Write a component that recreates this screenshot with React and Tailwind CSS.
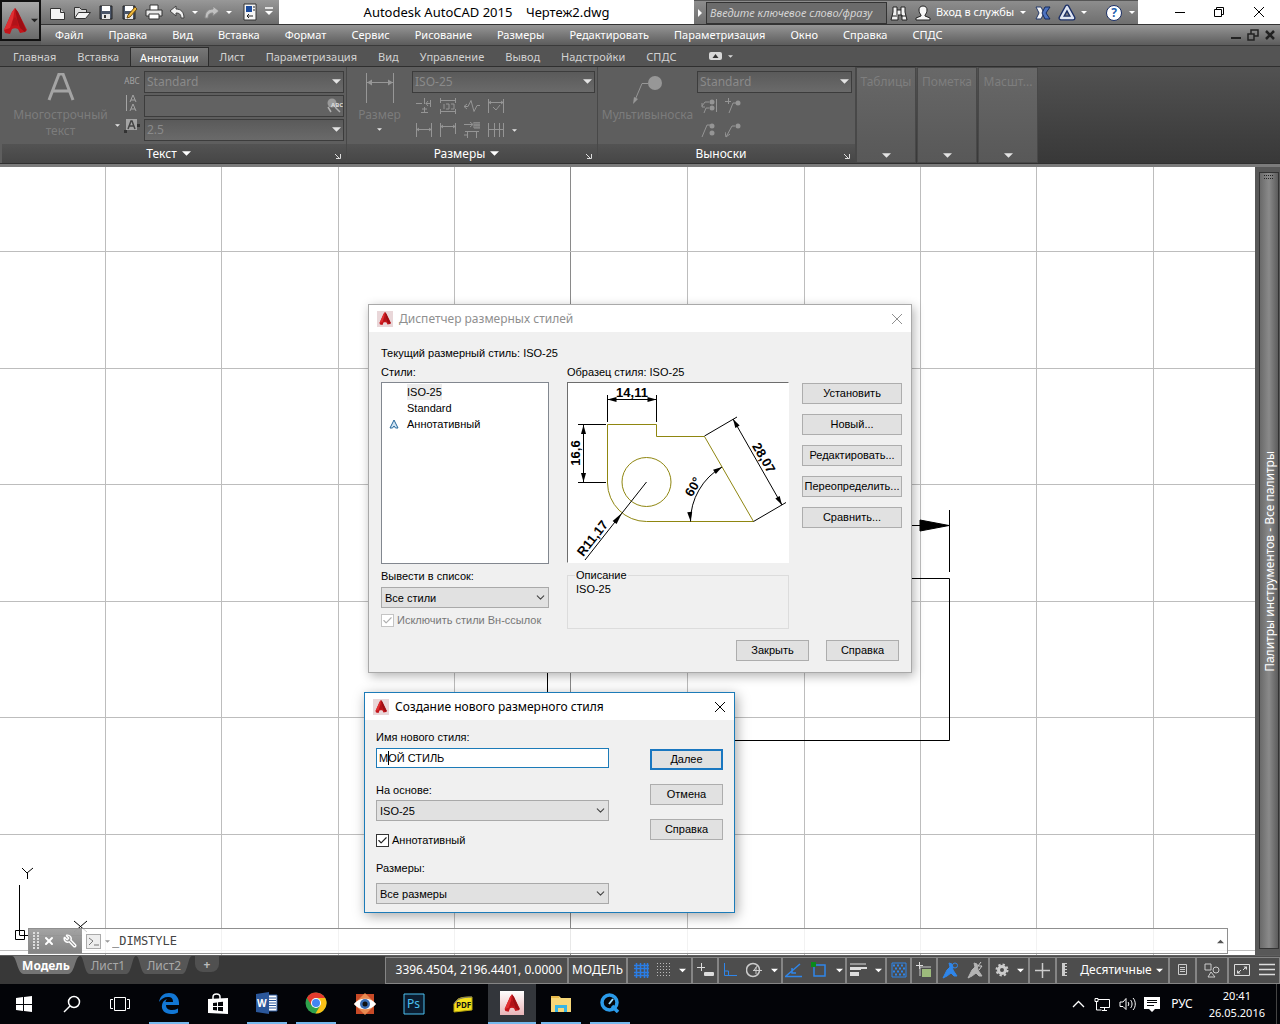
import { ChevronDown, Check, X, Wrench } from "lucide-react";

const MENU = ["Файл", "Правка", "Вид", "Вставка", "Формат", "Сервис", "Рисование", "Размеры", "Редактировать", "Параметризация", "Окно", "Справка", "СПДС"];
const TABS = ["Главная", "Вставка", "Аннотации", "Лист", "Параметризация", "Вид", "Управление", "Вывод", "Надстройки", "СПДС"];
const STYLES = ["ISO-25", "Standard", "Аннотативный"];

const VERTICALS = [105, 221, 338, 454, 570, 687, 804, 920, 1036, 1153];
const HORIZONTALS = [84, 201, 317, 434, 550, 667, 783];

function Svg({ w = 20, h = 20, className = "", children }) {
  return (
    <svg width={w} height={h} viewBox={`0 0 ${w} ${h}`} fill="none" className={`shrink-0 ${className}`} aria-hidden="true">
      {children}
    </svg>
  );
}

function Caret({ className = "text-white", size = 9 }) {
  return (
    <svg width={size} height="5" viewBox="0 0 10 5" className={`shrink-0 ${className}`} aria-hidden="true">
      <path d="M0 0h10L5 5z" fill="currentColor" />
    </svg>
  );
}

function LogoA({ w, h }) {
  return (
    <svg width={w} height={h} viewBox="0 0 24 26" className="shrink-0" aria-hidden="true">
      <path d="M12 0L9 4 1 22l1 3 5 1 2-5c2-1 4-1 6 0l2 4 5-1 2-2L15 4z" fill="#c4141a" />
      <path d="M12 0L9 4 1 22l6-2 3-9z" fill="#e02f32" />
      <path d="M12 0l3 4 8 18-1 2-5-4-3-9z" fill="#9c0e14" />
      <path d="M10 12l2-3 2 3 1 6c-2-1-4-1-6 0z" fill="#b01319" />
    </svg>
  );
}

/* ---------- Title bar ---------- */

function QuickAccess() {
  return (
    <div className="flex h-6 w-[238px] shrink-0 items-center gap-1 bg-linear-to-b from-[#989898] to-[#6c6c6c] pl-[7px]">
      <button aria-label="Создать">
        <Svg><path d="M2.500 6.500h10l4 4v7h-14z" fill="#f4f4f4" stroke="#333" /><path d="M12.500 6.500v4h4" fill="#ccc" stroke="#333" /></Svg>
      </button>
      <button aria-label="Открыть">
        <Svg><path d="M2.500 16V5.500h5l2 2h5v3" fill="#ddd" stroke="#333" /><path d="M2.500 16.500l4-6h12l-5 6z" fill="#f4f4f4" stroke="#333" /></Svg>
      </button>
      <button aria-label="Сохранить">
        <Svg><path d="M4 4h12v13H4z" fill="#4a5568" stroke="#222" /><path d="M6 4h8v5H6z" fill="#fff" /><path d="M6 12h8v5H6z" fill="#e5e5e5" /><path d="M8 13h2v3H8z" fill="#333" /></Svg>
      </button>
      <button aria-label="Сохранить как">
        <Svg><path d="M3 4h12v13H3z" fill="#4a5568" stroke="#222" /><path d="M5 4h8v5H5z" fill="#fff" /><path d="M5 12h8v5H5z" fill="#e5e5e5" /><path d="M8 13l7-8 2 2-7 8-3 1z" fill="#f0b93a" stroke="#6b4a10" /></Svg>
      </button>
      <button aria-label="Печать">
        <Svg><path d="M6 8V3h8v5" fill="#fff" stroke="#333" /><path d="M2 8h16v6H2z" fill="#e8e8e8" stroke="#333" /><path d="M5 12h10v5H5z" fill="#fff" stroke="#333" /></Svg>
      </button>
      <button aria-label="Отменить">
        <Svg><path d="M2 9l6-5v3c5 0 8 3 8 9h-3c0-4-2-5-5-5v3z" fill="#f0f0f0" stroke="#444" /></Svg>
      </button>
      <Caret size={6} />
      <button aria-label="Повторить">
        <Svg><path d="M17 9l-6-5v3c-5 0-8 3-8 9h3c0-4 2-5 5-5v3z" fill="#c0c0c0" stroke="#888" /></Svg>
      </button>
      <Caret size={6} />
      <button aria-label="Рабочее пространство" className="ml-1">
        <Svg><path d="M4 2h12v16H4z" fill="#f6f6f6" stroke="#333" /><path d="M6 4h6v6H6z" fill="#1d4c9c" /><path d="M13 5h2M13 8h2M7 14h6M7 14l2-2M7 14l2 2" stroke="#222" /></Svg>
      </button>
      <button aria-label="Настройка панели">
        <Svg w={10} h={12}><path d="M1 2h8" stroke="#fff" strokeWidth="1.5" /><path d="M1 5h8L5 9z" fill="#fff" /></Svg>
      </button>
    </div>
  );
}

function SearchGroup() {
  return (
    <div className="flex h-6 w-[444px] shrink-0 items-center border-t border-[#555] bg-linear-to-b from-[#8d8d8d] to-[#6f6f6f] text-white">
      <button aria-label="Развернуть" className="flex w-3 shrink-0 justify-center">
        <Svg w={6} h={10}><path d="M1 1l4 4-4 4z" fill="#fff" /></Svg>
      </button>
      <input
        aria-label="Поиск"
        placeholder="Введите ключевое слово/фразу"
        className="h-[22px] w-[181px] shrink-0 border border-[#333] bg-[#6b6b6b] px-[3px] text-[11px] italic placeholder:text-[#d4d4d4]"
      />
      <button aria-label="Найти" className="ml-[3px]">
        <Svg w={18} h={18}><path d="M3 3h4v3h4V3h4v5l2 8h-5v-5H8v5H1l2-8z" fill="#f2f2f2" stroke="#222" /><path d="M7 6v5M11 6v5M2 12h5M11 12h5" stroke="#222" /></Svg>
      </button>
      <button className="ml-[6px] flex items-center gap-1 text-[11px]">
        <Svg w={18} h={18}><path d="M9 2c3 0 4 2 4 4s-1 4-2 5v1l5 2v2H2v-2l5-2v-1C6 10 5 8 5 6s1-4 4-4z" fill="#f6f6f6" stroke="#222" /></Svg>
        <span className="whitespace-nowrap">Вход в службы</span>
        <Caret size={6} className="ml-[2px] text-white" />
      </button>
      <button aria-label="Exchange" className="ml-[8px]">
        <Svg w={18} h={18}><path d="M2 3h5l3 6-3 6H2l3-6z" fill="#f4f4f4" stroke="#23396b" /><path d="M16 3h-5L8 9l3 6h5l-4-6z" fill="#4d73c0" stroke="#152a5c" /></Svg>
      </button>
      <button aria-label="Autodesk 360" className="ml-[6px] flex items-center gap-[5px]">
        <Svg w={18} h={18}><path d="M9 3L3 14h12z" stroke="#1b2f66" strokeWidth="5" strokeLinejoin="round" /><path d="M9 3L3 14h12z" stroke="#dfe5f2" strokeWidth="2.4" strokeLinejoin="round" /></Svg>
        <Caret size={6} />
      </button>
      <button aria-label="Справка" className="ml-[19px] flex items-center gap-[7px]">
        <span className="flex h-4 w-4 items-center justify-center rounded-full border border-[#1b2f66] bg-white text-[12px] leading-none font-bold text-[#1f5fae]">?</span>
        <Caret size={6} />
      </button>
    </div>
  );
}

function Header() {
  return (
    <header className="flex bg-[#5a5a5a]">
      <button aria-label="Меню приложения" className="flex h-[41px] w-[41px] shrink-0 items-center justify-center gap-1 border-2 border-[#111] bg-linear-to-b from-[#a8a8a8] to-[#6a6a6a]">
        <LogoA w={24} h={26} />
        <Caret size={7} className="text-[#222]" />
      </button>
      <div className="min-w-0 flex-1">
        <div className="flex h-6 bg-white">
          <QuickAccess />
          <h1 className="flex-1 truncate text-center text-[13px] leading-6 whitespace-pre">{"Autodesk AutoCAD 2015    Чертеж2.dwg"}</h1>
          <SearchGroup />
          <div className="flex w-[142px] shrink-0 items-center justify-end gap-[28px] pr-[15px]">
            <button aria-label="Свернуть"><Svg w={10} h={12}><path d="M0 6.5h10" stroke="#000" /></Svg></button>
            <button aria-label="Восстановить"><Svg w={12} h={12}><path d="M1.5 3.5h7v7h-7zM3.5 3.5v-2h7v7h-2" stroke="#000" /></Svg></button>
            <button aria-label="Закрыть"><Svg w={12} h={12}><path d="M1 1l10 10M11 1L1 11" stroke="#000" /></Svg></button>
          </div>
        </div>
        <nav className="flex h-[21px] items-center gap-[25px] border-t border-[#333] bg-linear-to-b from-[#969696] to-[#5c5c5c] pl-[14px] text-[11px] text-white">
          {MENU.map((m) => (
            <button key={m} className="whitespace-nowrap">{m}</button>
          ))}
          <div className="ml-auto flex items-center gap-[6px] pr-[5px]">
            <button aria-label="Свернуть чертеж"><Svg w={10} h={12}><path d="M0 9h10" stroke="#222" strokeWidth="2" /></Svg></button>
            <button aria-label="Восстановить чертеж"><Svg w={12} h={12}><path d="M1 5h6v6H1zM4 5V1h7v6H7" stroke="#222" strokeWidth="1.5" /></Svg></button>
            <button aria-label="Закрыть чертеж"><Svg w={10} h={12}><path d="M1 2l8 8M9 2l-8 8" stroke="#222" strokeWidth="2.5" /></Svg></button>
          </div>
        </nav>
      </div>
    </header>
  );
}

/* ---------- Ribbon ---------- */

function RibbonSelect({ label, value }) {
  return (
    <div className="relative">
      <select aria-label={label} className="block h-[22px] w-full appearance-none border border-[#3c3c3c] bg-linear-to-b from-[#5a5a5a] to-[#6a6a6a] px-[2px] text-[12px] text-[#8a8a8a]">
        <option>{value}</option>
      </select>
      <Caret className="pointer-events-none absolute top-2 right-[3px] text-[#e4e4e4]" />
    </div>
  );
}

function PanelLabel({ children, launcher = true }) {
  return (
    <div className="relative flex h-[19px] items-center justify-center bg-linear-to-b from-[#535353] to-[#464646] pr-[11px] text-[12px] text-white">
      <button className="flex items-center gap-[5px]">{children}</button>
      {launcher && (
        <button aria-label="Параметры" className="absolute right-[5px] bottom-1">
          <Svg w={6} h={6}><path d="M0 1l4 4M5.5 1v4.5H1" stroke="#ddd" /></Svg>
        </button>
      )}
    </div>
  );
}

function ToolIcon({ name, d, dots }) {
  return (
    <button aria-label={name}>
      <Svg w={16} h={16}>
        <path d={d} stroke="#959595" />
        {dots && dots.map(([x, y]) => <circle key={`${x}-${y}`} cx={x} cy={y} r="2.5" fill="#959595" />)}
      </Svg>
    </button>
  );
}

function CollapsedPanel({ title }) {
  return (
    <button className="flex w-[60px] shrink-0 flex-col items-center justify-between overflow-hidden border border-[#484848] bg-linear-to-b from-[#686868] to-[#585858] pt-[5px] pb-1 text-[12px] text-[#7e7e7e]">
      <span className="whitespace-nowrap">{title}</span>
      <Caret className="text-[#e4e4e4]" />
    </button>
  );
}

function Ribbon() {
  return (
    <section className="bg-[#545454]">
      <div role="tablist" className="flex h-[21px] items-end gap-px border-t border-[#3a3a3a] pl-[3px] text-[11px] text-[#d2d2d2]">
        {TABS.map((t) =>
          t === "Аннотации" ? (
            <button key={t} role="tab" aria-selected="true" className="h-[19px] border border-b-0 border-[#2c2c2c] bg-linear-to-b from-[#777] to-[#5e5e5e] px-[9px] leading-[17px] whitespace-nowrap text-white">{t}</button>
          ) : (
            <button key={t} role="tab" aria-selected="false" className="h-[19px] px-[10px] leading-[19px] whitespace-nowrap">{t}</button>
          )
        )}
        <button aria-label="Вид ленты" className="ml-[22px] flex h-[19px] items-center gap-[6px]">
          <Svg w={13} h={9}><rect width="13" height="8" rx="2" fill="#d8d8d8" /><path d="M3.5 6h6l-3-4z" fill="#333" /></Svg>
          <Caret size={5} className="text-[#d8d8d8]" />
        </button>
      </div>

      <div className="flex h-[98px] border-y border-[#2f2f2f] bg-linear-to-b from-[#525252] to-[#383838]">
        <div className="flex w-[347px] shrink-0 flex-col border-r border-[#484848] bg-[#5e5e5e] pl-[2px]">
          <div className="flex flex-1 pt-1">
            <button className="flex w-[118px] shrink-0 items-center text-[12px] leading-4 text-[#7c7c7c]">
              <span className="flex flex-1 flex-col items-center">
                <Svg w={28} h={28} className="mb-[6px]"><path d="M2 27L12 1h4l10 26M6 18h16" stroke="#a4a4a4" strokeWidth="3" /></Svg>
                <span>Многострочный</span>
                <span className="pb-[3px]">текст</span>
              </span>
              <Caret size={5} className="mt-9 -ml-1 text-[#e4e4e4]" />
            </button>
            <div className="flex w-[24px] shrink-0 flex-col items-center gap-2 pt-1 text-[#a4a4a4]">
              <span className="text-[8px] leading-3">ABC</span>
              <Svg w={14} h={16}><path d="M1.5 0v16M5 7l3-7 3 7M6 5h4M5 16l3-7 3 7M6 14h4" stroke="#a4a4a4" /></Svg>
              <Svg w={16} h={14}><path d="M2 0h11v11H2z" fill="#a4a4a4" /><path d="M4 10l3-8h1l3 8M5 7h5" stroke="#444" strokeWidth="1.5" /><path d="M0 11h3v3H0zM13 5h3v3h-3z" fill="#333" /></Svg>
            </div>
            <div className="flex w-[200px] shrink-0 flex-col gap-[2px]">
              <RibbonSelect label="Стиль текста" value="Standard" />
              <div className="relative">
                <input aria-label="Найти текст" className="block h-[22px] w-full border border-[#3c3c3c] bg-[#626262] px-1 text-[12px] text-[#ddd]" />
                <Svg w={17} h={16} className="pointer-events-none absolute top-[3px] right-px"><circle cx="6" cy="5" r="4.5" fill="#9a9a9a" /><path d="M9 9l5 5M2 9l3 5" stroke="#b0b0b0" strokeWidth="1.5" /><text x="5" y="9" fontSize="6" fontWeight="700" fill="#ddd">ABC</text></Svg>
              </div>
              <RibbonSelect label="Высота текста" value="2.5" />
            </div>
          </div>
          <PanelLabel>Текст <Caret /></PanelLabel>
        </div>

        <div className="flex w-[251px] shrink-0 flex-col border-r border-[#484848] bg-[#5e5e5e]">
          <div className="flex flex-1 pt-1">
            <button className="flex w-[65px] flex-col items-center text-[12px] leading-4 text-[#7c7c7c]">
              <Svg w={30} h={30} className="mt-[2px] mb-1"><path d="M1.5 0v30M28.5 0v30M2 9.5h26" stroke="#979797" /><path d="M2 9.5l5-3v6zM28 9.5l-5-3v6z" fill="#979797" /></Svg>
              <span>Размер</span>
              <Caret size={5} className="mt-1 text-[#e4e4e4]" />
            </button>
            <div className="flex w-[183px] flex-col">
              <RibbonSelect label="Размерный стиль" value="ISO-25" />
              <div className="mt-[5px] flex gap-2 pl-1">
                <ToolIcon name="Разрыв" d="M8.500 0v6M0 5.500h6M10 5.500h5M14.500 2v7M12 3l-2 2.500L12 8M8.500 9v6M5 14.500h7M6 11h5" />
                <ToolIcon name="Корректировать" d="M.5 0v5M15.500 0v5M1 2.500h14M.5 11v5M15.500 11v5M1 13.500h14M4 6v5M6 6h3v5H6M11 6h3v5h-3" />
                <ToolIcon name="Излом" d="M0 8.500h4l3-6 3 11 3-6h3M3 6L0 8.500 3 11" />
                <ToolIcon name="Контроль" d="M.5 1v14M15.500 1v14M1 4.500h14M5 9l3 3 4-5M3 3L1 4.500 3 6M13 3l2 1.500L13 6" />
              </div>
              <div className="mt-2 flex items-center gap-2 pl-1">
                <ToolIcon name="Линейный" d="M.5 1v14M15.500 1v14M1 7.500h14M3 6L1 7.500 3 9M13 6l2 1.500L13 9" />
                <ToolIcon name="Быстрый" d="M.5 1v14M15.500 1v11M1 4.500h14M3 3L1 4.500 3 6M13 3l2 1.500L13 6" />
                <ToolIcon name="Обновить" d="M0 2.500h8M6 0l3 2.500L6 5M10 0h6v6h-6zM12 0v6M14 0v6M10 3h6M1 9.500h14M3.500 9v7M12.500 9v7M0 13h3" />
                <ToolIcon name="Цепь" d="M.5 1v14M6.500 1v14M11.500 1v14M15.500 1v14M1 7.500h15" />
                <Caret size={5} className="text-[#e4e4e4]" />
              </div>
            </div>
          </div>
          <PanelLabel>Размеры <Caret /></PanelLabel>
        </div>

        <div className="flex w-[258px] shrink-0 flex-col border-r border-[#484848] bg-[#5e5e5e]">
          <div className="flex flex-1 pt-1">
            <button className="flex w-[99px] flex-col items-center text-[12px] leading-4 text-[#7c7c7c]">
              <Svg w={30} h={30} className="mt-[3px] mb-[3px]"><circle cx="22" cy="9" r="7" fill="#979797" /><path d="M15 9.500H9L2 26" stroke="#979797" /><path d="M0 30l1-7 4 2z" fill="#979797" /></Svg>
              <span>Мультивыноска</span>
            </button>
            <div className="flex w-[155px] flex-col">
              <RibbonSelect label="Стиль выносок" value="Standard" />
              <div className="mt-[5px] flex gap-2 pl-1">
                <ToolIcon name="Выровнять" d="M15.500 1v13M8 4H4L1 8M8 10H5l-2 5M1 5v4h3" dots={[[11, 4], [11, 10]]} />
                <ToolIcon name="Добавить" d="M0 3.500h6M3.500 0v6M11 5H8L4 15" dots={[[13, 5]]} />
              </div>
              <div className="mt-2 flex gap-2 pl-1">
                <ToolIcon name="Собрать" d="M9 3H6L1 15" dots={[[11, 4], [11, 11]]} />
                <ToolIcon name="Удалить" d="M10 4H7L1 15M0 10l1 5 4-3" dots={[[13, 4]]} />
              </div>
            </div>
          </div>
          <PanelLabel>Выноски</PanelLabel>
        </div>
        <div className="flex gap-px">
          <CollapsedPanel title="Таблицы" />
          <CollapsedPanel title="Пометка" />
          <CollapsedPanel title="Масшт..." />
        </div>
      </div>
      <div className="h-[3px] bg-[#7b7b7b]" />
    </section>
  );
}

/* ---------- Dialogs ---------- */

function DialogButton({ children, primary }) {
  return primary ? (
    <button className="h-[21px] w-[73px] border-2 border-[#1a77c0] bg-[#e1e1e1] leading-[17px]">{children}</button>
  ) : (
    <button className="h-[21px] w-[73px] border border-[#adadad] bg-[#e1e1e1] leading-[19px]">{children}</button>
  );
}

function DialogSelect({ id, value }) {
  return (
    <div className="relative">
      <select id={id} className="block h-[21px] w-full appearance-none border border-[#a9a9a9] bg-[#e1e1e1] px-[3px]">
        <option>{value}</option>
      </select>
      <ChevronDown className="pointer-events-none absolute top-[4px] right-[2px] h-[13px] w-[13px] text-[#444]" strokeWidth={2} />
    </div>
  );
}

function CheckBox({ id, label, disabled }) {
  return (
    <div className="flex items-center gap-[3px]">
      <span className="relative h-[13px] w-[13px] shrink-0">
        <input id={id} type="checkbox" defaultChecked disabled={disabled} className="block h-[13px] w-[13px] appearance-none border border-[#333] bg-white disabled:border-[#c4c4c4]" />
        <Check className={disabled ? "pointer-events-none absolute top-px left-px h-[11px] w-[11px] text-[#b0b0b0]" : "pointer-events-none absolute top-px left-px h-[11px] w-[11px] text-[#222]"} strokeWidth={2.5} />
      </span>
      <label htmlFor={id} className={disabled ? "whitespace-nowrap text-[#777]" : "whitespace-nowrap"}>{label}</label>
    </div>
  );
}

function Arrow({ x, y, a, l = 12 }) {
  return <path d={`M0 0L-${l} -2.500V2.500z`} fill="#000" transform={`translate(${x} ${y}) rotate(${a})`} />;
}

function Preview() {
  return (
    <svg width="220" height="179" viewBox="0 0 220 179" fill="none" className="block bg-white font-['Liberation_Sans',sans-serif]">
      <path d="M39.5 100V41.500H88.500V53.500H136.500L185.500 138.500H78.500A39 39 0 0 1 39.500 100" stroke="#8f8610" />
      <circle cx="78.5" cy="99" r="24.5" stroke="#8f8610" />
      <g stroke="#000">
        <path d="M39.5 12V39M88.500 12V39M39.500 16.500H88.500" />
        <path d="M10 41.500H38M10 99.500H38M15.500 42V99" />
        <path d="M78.500 99L17 177" />
        <path d="M136.500 53L169 34M185.500 138.500L218 119.500M165 36L214 122" />
        <path d="M122.500 138.500A63 63 0 0 1 154 84" />
      </g>
      <Arrow x={39.5} y={16.5} a={180} l={9} />
      <Arrow x={88.5} y={16.5} a={0} l={9} />
      <Arrow x={15.5} y={42} a={-90} l={9} />
      <Arrow x={15.5} y={99} a={90} l={9} />
      <Arrow x={54} y={130} a={-52} />
      <Arrow x={165} y={36} a={-120} l={9} />
      <Arrow x={214} y={122} a={60} l={9} />
      <Arrow x={122.5} y={138} a={85} l={9} />
      <Arrow x={154} y={84} a={-33} l={9} />
      <g fill="#000" fontSize="13" fontWeight="700" textAnchor="middle">
        <text x="64" y="14">14,11</text>
        <text transform="translate(12 70) rotate(-90)">16,6</text>
        <text transform="translate(28 158) rotate(-52)">R11,17</text>
        <text transform="translate(129 106) rotate(-60)">60°</text>
        <text transform="translate(192 77) rotate(60)">28,07</text>
      </g>
    </svg>
  );
}

function DialogTitle({ children, muted }) {
  return (
    <div className="flex h-[27px] items-center bg-white px-2 font-['Noto_Sans','Open_Sans',sans-serif] text-[12px]">
      <span className="flex h-4 w-4 shrink-0 items-center justify-center bg-[#e9d7d9]"><LogoA w={12} h={13} /></span>
      <h2 className={muted ? "ml-[6px] flex-1 text-[#8f8f8f]" : "ml-[6px] flex-1"}>{children}</h2>
      <button aria-label="Закрыть окно">
        <Svg w={12} h={12}><path d="M1 1l10 10M11 1L1 11" stroke={muted ? "#8f8f8f" : "#000"} /></Svg>
      </button>
    </div>
  );
}

function StyleManager() {
  return (
    <div role="dialog" aria-label="Диспетчер размерных стилей" className="absolute top-[137px] left-[368px] w-[544px] border border-[#a9a9a9] bg-[#f0f0f0] font-['Liberation_Sans',sans-serif] text-[11px] leading-4 shadow-[2px_3px_10px_rgba(0,0,0,0.3)]">
      <DialogTitle muted>Диспетчер размерных стилей</DialogTitle>
      <div className="px-3 pt-[13px] pb-[11px]">
        <p>Текущий размерный стиль: ISO-25</p>
        <div className="mt-[3px] flex">
          <div className="w-[168px] shrink-0">
            <p id="styles-label">Стили:</p>
            <ul role="listbox" aria-labelledby="styles-label" className="mt-[2px] h-[182px] border border-[#82878f] bg-white pt-px">
              {STYLES.map((s, i) => (
                <li key={s} role="option" aria-selected={i === 0} className="flex h-4 items-center">
                  <span className="flex w-[25px] justify-end pr-2">
                    {i === 2 && <Svg w={10} h={10}><path d="M5 1L1 9h2.500L5 7l1.500 2H9z" fill="#cfe3f2" stroke="#27689c" /></Svg>}
                  </span>
                  <span className={i === 0 ? "bg-[#ececec]" : ""}>{s}</span>
                </li>
              ))}
            </ul>
            <label htmlFor="list-filter" className="mt-1 mb-[3px] block">Вывести в список:</label>
            <DialogSelect id="list-filter" value="Все стили" />
            <div className="mt-1">
              <CheckBox id="xref" label="Исключить стили Вн-ссылок" disabled />
            </div>
          </div>
          <div className="ml-[18px] w-[222px] shrink-0">
            <p>Образец стиля: ISO-25</p>
            <div className="mt-[2px] border border-t-[#6d6d6d] border-r-white border-b-white border-l-[#6d6d6d]">
              <Preview />
            </div>
            <fieldset className="mt-1 h-[62px] border border-[#dcdcdc] px-[7px]">
              <legend className="px-px">Описание</legend>
              <p className="-mt-[2px] pl-px">ISO-25</p>
            </fieldset>
          </div>
          <div className="ml-[13px] flex shrink-0 flex-col gap-[10px] pt-[19px]">
            {["Установить", "Новый...", "Редактировать...", "Переопределить...", "Сравнить..."].map((b) => (
              <button key={b} className="h-[21px] w-[100px] border border-[#adadad] bg-[#e1e1e1] leading-[19px] whitespace-nowrap">{b}</button>
            ))}
          </div>
        </div>
        <div className="mt-[11px] flex justify-end gap-[17px]">
          <DialogButton>Закрыть</DialogButton>
          <DialogButton>Справка</DialogButton>
        </div>
      </div>
    </div>
  );
}

function NewStyle() {
  return (
    <div role="dialog" aria-label="Создание нового размерного стиля" className="absolute top-[525px] left-[364px] w-[371px] border border-[#1c7bb8] bg-[#f0f0f0] font-['Liberation_Sans',sans-serif] text-[11px] leading-4 shadow-[2px_3px_12px_rgba(0,0,0,0.35)]">
      <DialogTitle>Создание нового размерного стиля</DialogTitle>
      <div className="flex justify-between pt-[9px] pr-[11px] pb-2 pl-[11px]">
        <div className="w-[233px]">
          <label htmlFor="style-name" className="mb-[3px] block">Имя нового стиля:</label>
          <div className="relative">
            <input id="style-name" defaultValue="МОЙ СТИЛЬ" className="block h-[20px] w-full border border-[#1c7bb8] bg-white px-[2px]" />
            <span className="absolute top-[3px] left-[12px] h-[14px] w-px bg-black" />
          </div>
          <label htmlFor="base-style" className="mt-[14px] mb-[2px] block">На основе:</label>
          <DialogSelect id="base-style" value="ISO-25" />
          <div className="mt-[11px]">
            <CheckBox id="annotative" label="Аннотативный" />
          </div>
          <label htmlFor="dims" className="mt-3 mb-[7px] block">Размеры:</label>
          <DialogSelect id="dims" value="Все размеры" />
        </div>
        <div className="flex flex-col gap-[14px] pt-5">
          <DialogButton primary>Далее</DialogButton>
          <DialogButton>Отмена</DialogButton>
          <DialogButton>Справка</DialogButton>
        </div>
      </div>
    </div>
  );
}

/* ---------- Drawing ---------- */

function Canvas() {
  return (
    <main className="relative min-w-0 flex-1 overflow-hidden bg-white">
      <svg className="absolute inset-0 h-full w-full" fill="none" aria-hidden="true">
        {VERTICALS.map((x) => (
          <path key={x} d={`M${x}.5 0V2000`} stroke={x === 570 ? "#8a8a8a" : "#bdbdbd"} />
        ))}
        {HORIZONTALS.map((y) => (
          <path key={y} d={`M0 ${y}.5H4000`} stroke="#bdbdbd" />
        ))}
        <g stroke="#000">
          <path d="M911 358.500H949M949.500 343V405M911 411.500H949.500V573.500H547.500V505" />
          <path d="M920 353L949 358.500L920 364z" fill="#000" />
          <path d="M19.500 718V768M19.500 768.500H82M15.500 763.500h9v9h-9z" />
          <path d="M22 701l5 5 6-5M27.500 706v6M74 754l13 11M87 754l-13 11" />
        </g>
      </svg>
      <StyleManager />
      <NewStyle />
      <div className="absolute right-[27px] bottom-px left-7 flex h-[26px] items-stretch border border-[#8f8f8f] bg-white/80">
        <div className="flex w-[53px] items-center gap-2 bg-linear-to-b from-[#999]/90 to-[#777]/90 pl-1">
          <Svg w={6} h={18}><path d="M1 0v18M5 0v18" stroke="#ddd" strokeWidth="2" strokeDasharray="2 1" /></Svg>
          <button aria-label="Закрыть строку" className="-ml-1"><X className="h-3 w-3 text-white" strokeWidth={4} /></button>
          <button aria-label="Настройка строки"><Wrench className="h-[14px] w-[14px] -scale-x-100 text-white" strokeWidth={2.5} /></button>
        </div>
        <div className="flex flex-1 items-center pl-1">
          <Svg w={15} h={15}><rect x=".5" y=".5" width="14" height="14" fill="#eee" stroke="#aaa" /><path d="M3 4l4 3-4 4M8 11h5" stroke="#777" /></Svg>
          <Caret size={5} className="ml-1 text-[#999]" />
          <input aria-label="Командная строка" defaultValue="_DIMSTYLE" className="ml-[2px] min-w-0 flex-1 bg-transparent font-['DejaVu_Sans_Mono',monospace] text-[12px] text-[#444]" />
        </div>
        <Caret size={7} className="mt-[10px] mr-[3px] rotate-180 text-[#555]" />
      </div>
    </main>
  );
}

function Palette() {
  return (
    <aside className="flex w-[25px] shrink-0 justify-end bg-[#585858] pt-[5px] pr-px pb-[6px]">
      <div className="flex w-5 flex-col items-end border border-[#333] bg-linear-to-r from-[#6a6a6a] via-[#8a8a8a] to-[#5c5c5c]">
        <Svg w={10} h={6} className="mt-px mr-1"><path d="M0 1.500h10M0 4.500h10" stroke="#222" strokeDasharray="1 1" /></Svg>
        <span className="mt-[271px] rotate-180 text-[12px] leading-4 whitespace-nowrap text-white [writing-mode:vertical-rl]">Палитры инструментов - Все палитры</span>
      </div>
    </aside>
  );
}

/* ---------- Status bar ---------- */

function LayoutTab({ children, active }) {
  return (
    <button className={active ? "relative h-[18px] w-[68px] font-bold text-white" : "relative h-[18px] w-14 text-[#a9a9a9]"}>
      <svg viewBox="0 0 68 18" preserveAspectRatio="none" className="absolute inset-0 h-full w-full" aria-hidden="true">
        <path d="M0 0C5 0 5 18 12 18H56C63 18 63 0 68 0z" fill={active ? "#757575" : "#565656"} />
      </svg>
      <span className="relative">{children}</span>
    </button>
  );
}

function Cell({ className, children }) {
  return <div className={`flex h-[27px] shrink-0 items-center justify-center border border-[#858585] whitespace-nowrap ${className}`}>{children}</div>;
}

function Person({ color, children }) {
  return (
    <Svg w={17} h={17}>
      <path d="M7 1l3 1 1 6 4 6h-3l-3-3-4 3-4 2 4-8 3-3z" fill={color} stroke={color} />
      {children}
    </Svg>
  );
}

function StatusBar() {
  return (
    <div className="flex h-[29px] shrink-0 border-t border-[#5e5e5e] bg-[#383838] text-[12px]">
      <div className="flex items-start pl-3 text-[12px] leading-[17px]">
        <LayoutTab active>Модель</LayoutTab>
        <LayoutTab>Лист1</LayoutTab>
        <LayoutTab>Лист2</LayoutTab>
        <button aria-label="Новый лист" className="ml-[3px] flex h-4 w-6 items-center justify-center rounded-br-lg rounded-bl-lg bg-[#505050] font-bold text-[#bbb]">+</button>
      </div>
      <div className="ml-auto flex items-center bg-[#4d4d4d] text-white">
        <Cell className="w-[183px] justify-end pr-[5px]">3396.4504, 2196.4401, 0.0000</Cell>
        <Cell className="w-[59px]"><button>МОДЕЛЬ</button></Cell>
        <Cell className="w-[65px] gap-2">
          <Svg w={15} h={15}><path d="M2.500 0v15M6.500 0v15M10.500 0v15M13.500 0v15M0 2.500h15M0 5.500h15M0 9.500h15M0 12.500h15" stroke="#2a7de6" strokeWidth="1.500" /></Svg>
          <Svg w={14} h={14}><path d="M0 .5h14M0 3.500h14M0 6.500h14M0 9.500h14M0 12.500h14" stroke="#bbb" strokeDasharray="1 2" /></Svg>
          <Caret size={7} />
        </Cell>
        <Cell className="w-[26px]"><Svg w={17} h={15}><path d="M4.500 0v8M0 4.500h8" stroke="#ddd" /><rect x="7" y="9" width="10" height="4" rx="1" fill="#ddd" /></Svg></Cell>
        <Cell className="w-[64px] gap-[9px]">
          <Svg w={14} h={14}><path d="M1.500 0v12.500H14M1.500 8h4v4" stroke="#2f86ea" /></Svg>
          <Svg w={16} h={16}><circle cx="7" cy="8" r="6.5" stroke="#ccc" strokeWidth="1.5" /><path d="M7 8.500h9M10 5v7M8 8l4-5" stroke="#ccc" /></Svg>
          <Caret size={7} />
        </Cell>
        <Cell className="w-[64px] gap-[9px]">
          <Svg w={17} h={15}><path d="M0 13.500h17M1 13L15 1M7 5v5h4" stroke="#2f86ea" strokeWidth="1.500" /></Svg>
          <Svg w={16} h={16}><path d="M3 3h11v11H3z" stroke="#2f86ea" strokeWidth="1.500" /><path d="M0 0h5v5H0z" fill="#0b8a1a" /></Svg>
          <Caret size={7} />
        </Cell>
        <Cell className="w-[40px] gap-2">
          <Svg w={17} h={14}><path d="M0 1h16" stroke="#ddd" /><path d="M0 5.500h11" stroke="#ddd" strokeWidth="3" /><path d="M11 5h6" stroke="#ddd" strokeWidth="2" /><path d="M0 11h9" stroke="#ddd" strokeWidth="4" /></Svg>
          <Caret size={7} />
        </Cell>
        <Cell className="w-[25px]">
          <Svg w={16} h={16}><path d="M1 1h14v14H1z" stroke="#2f86ea" /><path d="M2 3.500h12M2 9.500h12" stroke="#2f86ea" strokeWidth="2" strokeDasharray="2 2" /><path d="M4 6.500h10M4 12.500h10" stroke="#2f86ea" strokeWidth="2" strokeDasharray="2 2" /></Svg>
        </Cell>
        <Cell className="w-[26px]">
          <Svg w={16} h={16}><path d="M3.500 0v7M0 3.500h7" stroke="#ddd" /><path d="M4 14V5h11" stroke="#ccc" /><path d="M6 7h9v8H6z" fill="#9dbb7c" /></Svg>
        </Cell>
        <Cell className="w-[52px] gap-2">
          <Person color="#2f86ea"><circle cx="13" cy="3.500" r="2.500" stroke="#2f86ea" /></Person>
          <Person color="#b4b4b4"><path d="M14 0l-3 4h4l-3 4" stroke="#ccc" /></Person>
        </Cell>
        <Cell className="w-[40px] gap-2">
          <Svg w={14} h={14}><circle cx="7" cy="7" r="3.500" stroke="#ccc" strokeWidth="3" /><circle cx="7" cy="7" r="5.500" stroke="#ccc" strokeWidth="2" strokeDasharray="2.300 2" /></Svg>
          <Caret size={7} />
        </Cell>
        <Cell className="w-[27px]"><Svg w={15} h={15}><path d="M7.500 0v15M0 7.500h15" stroke="#ccc" strokeWidth="1.500" /></Svg></Cell>
        <Cell className="w-[113px] gap-1">
          <Svg w={14} h={15}><path d="M0 0h5v1H3v2h2v1H3v2h2v1H3v2h2v1H3v2h2v1H0z" fill="#ccc" /></Svg>
          <button className="flex items-center gap-1">Десятичные <Caret size={7} /></button>
        </Cell>
        <Cell className="w-[27px]"><Svg w={10} h={12}><path d="M.5 .5h8v10h-8zM2 3.500h5M2 5.500h5M2 7.500h5" stroke="#ccc" /></Svg></Cell>
        <Cell className="w-[32px]"><Svg w={16} h={15}><path d="M1 1h6v6H1z" stroke="#ccc" /><circle cx="12" cy="7" r="3" stroke="#ccc" /><path d="M7 9l4 5H4z" stroke="#ccc" /></Svg></Cell>
        <Cell className="w-[52px] gap-2">
          <Svg w={17} h={13}><path d="M.5 .5h15v11H.5z" stroke="#ddd" /><path d="M3 9.500V6l3.500 3.500zM13 2.500V6L9.500 2.500z" fill="#ddd" /><path d="M4 9l3-3M12 3L9 6" stroke="#ddd" /></Svg>
          <Svg w={16} h={14}><path d="M0 1.500h16M0 6.500h16M0 11.500h16" stroke="#ddd" strokeWidth="1.500" /></Svg>
        </Cell>
      </div>
    </div>
  );
}

/* ---------- Taskbar ---------- */

function Task({ name, open, active, children }) {
  return (
    <button aria-label={name} className={active ? "ml-px flex h-10 w-12 flex-col items-center bg-[#33363b]" : "ml-px flex h-10 w-12 flex-col items-center"}>
      <span className="flex flex-1 items-center">{children}</span>
      {open && <span className={active ? "h-[2px] w-full bg-[#76b9ed]" : "h-[2px] w-10 bg-[#76b9ed]"} />}
    </button>
  );
}

function Taskbar() {
  return (
    <footer className="flex h-10 shrink-0 items-center bg-[#030408] text-[11px] text-white">
      <button aria-label="Пуск" className="flex w-12 justify-center"><Svg w={16} h={16}><path d="M0 2l7-1v7H0zM8 1l8-1v8H8zM0 9h7v6l-7-1zM8 9h8v7l-8-1z" fill="#fff" /></Svg></button>
      <button aria-label="Поиск" className="flex w-12 justify-center"><Svg w={18} h={18}><circle cx="11" cy="7" r="5.500" stroke="#fff" strokeWidth="1.500" /><path d="M7 11l-6 6" stroke="#fff" strokeWidth="1.500" /></Svg></button>
      <button aria-label="Представление задач" className="flex w-12 justify-center"><Svg w={20} h={16}><path d="M4.500 1.500h11v13h-11zM3 3.500H.5v9H3M17 3.500h2.500v9H17" stroke="#fff" /></Svg></button>
      <Task name="Edge" open>
        <Svg w={20} h={21}><path d="M0 9C1 3 5 0 10 0c7 0 10 5 10 10v2H7c0 4 3 5 6 5 2 0 4-.5 6-1.500v4C17 20.500 15 21 12 21 6 21 2 17 3 12c.5-3 2-5 5-6-1 1-1.500 2-1.500 3H14c0-4-2-5-5-5C5 4 2 6 0 9z" fill="#1277d4" /></Svg>
      </Task>
      <Task name="Магазин">
        <Svg w={22} h={22}><path d="M6 6V4c0-4 7-4 7 0v2" stroke="#fff" strokeWidth="1.500" /><path d="M1 6l20-1v16L1 20z" fill="#fff" /><path d="M6 10l4-.5V13H6zM11 9.300l5-.6V13h-5zM6 14h4v3.500L6 17zM11 14h5v4.300l-5-.6z" fill="#030408" /></Svg>
      </Task>
      <Task name="Word" open>
        <Svg w={22} h={22}><path d="M11 3h10v16H11z" fill="#fff" stroke="#2b579a" /><path d="M13 6h7M13 8.500h7M13 11h7M13 13.500h7M13 16h7" stroke="#2b579a" /><path d="M0 2l13-2v22L0 20z" fill="#2b579a" /><text x="1" y="15" fontSize="10" fontWeight="700" fill="#fff">W</text></Svg>
      </Task>
      <Task name="Chrome" open>
        <Svg w={22} h={22}><circle cx="11" cy="11" r="10.500" fill="#2ea24c" /><path d="M1.900 5.700A10.500 10.500 0 0 1 20.200 6H11L6.500 13.500z" fill="#e33b2e" /><path d="M20.200 6A10.500 10.500 0 0 1 10.500 21.500L15.300 13.500 13 6z" fill="#fbc116" /><circle cx="11" cy="11" r="5" fill="#fff" /><circle cx="11" cy="11" r="4" fill="#4285f4" /></Svg>
      </Task>
      <Task name="Просмотр изображений">
        <Svg w={24} h={24}><path d="M3 2h18v20H3z" fill="#c84a26" /><path d="M12 1l11 11-11 11L1 12z" fill="#e88a50" /><path d="M1 12c5-7 17-7 22 0-5 7-17 7-22 0z" fill="#fff" /><circle cx="12" cy="12" r="5" fill="#3a6cb4" /><circle cx="12" cy="12" r="2.500" fill="#111" /></Svg>
      </Task>
      <Task name="Photoshop">
        <Svg w={22} h={22}><path d="M1 1h20v20H1z" fill="#0b1d30" stroke="#4cc0f0" /><text x="4" y="15" fontSize="12" fill="#4cc0f0">Ps</text></Svg>
      </Task>
      <Task name="PDF">
        <Svg w={20} h={17}><path d="M5 3c4-2 8-2 14-2v13L1 16V8z" fill="#f6e11c" stroke="#b5a40e" /><path d="M1 8c2-5 9-7 18-7" stroke="#777" /><text x="3" y="12" fontSize="8" fontWeight="700" fill="#111">PDF</text></Svg>
      </Task>
      <Task name="AutoCAD" open active>
        <span className="flex h-6 w-6 items-center justify-center bg-linear-to-b from-white to-[#e8b5b8]"><LogoA w={16} h={18} /></span>
      </Task>
      <Task name="Проводник" open>
        <Svg w={22} h={19}><path d="M1 2h8l2 2h10v14H1z" fill="#f7d778" /><path d="M1 2h8v2H1z" fill="#e6b84a" /><path d="M5 18v-7h12v7h-3v-4H8v4z" fill="#35b5e5" /></Svg>
      </Task>
      <Task name="QuickTime" open>
        <Svg w={20} h={20}><circle cx="9.500" cy="9.500" r="7.500" stroke="#2b9bea" strokeWidth="3.500" /><path d="M9 11l4-5" stroke="#9adcff" strokeWidth="2" /><path d="M12 13l6 6" stroke="#2b9bea" strokeWidth="3.500" /></Svg>
      </Task>

      <div className="ml-auto flex h-10 items-center gap-2">
        <button aria-label="Скрытые значки"><Svg w={13} h={8}><path d="M1 7l5.500-5.500L12 7" stroke="#fff" strokeWidth="1.300" /></Svg></button>
        <Svg w={17} h={14} className="ml-px"><path d="M4 2.500h11.500v8H6M1 1.500h3v3H1zM2.500 5v8h5M8 13.500h5M10.500 11v2" stroke="#fff" /></Svg>
        <Svg w={17} h={14}><path d="M1 5h3l3-3.500v11L4 9.500H1zM9 5c1 1 1 3 0 4M11.500 3c2 2 2 6 0 8M14 1c3 3 3 9 0 12" stroke="#fff" /></Svg>
        <Svg w={16} h={15}><path d="M0 0h16v12h-5l-3 3-3-3H0z" fill="#fff" /><path d="M3 3.500h10M3 5.500h10M3 8.500h7" stroke="#030408" /></Svg>
        <span className="ml-[3px] text-[12px]">РУС</span>
        <div className="ml-2 text-center leading-[17px]">
          <p>20:41</p>
          <p>26.05.2016</p>
        </div>
        <div className="ml-[3px] h-10 w-[4px] border-l border-[#444]" />
      </div>
    </footer>
  );
}

export default function App() {
  return (
    <div className="flex h-screen flex-col overflow-hidden font-['Noto_Sans','Open_Sans',sans-serif] text-black">
      <Header />
      <Ribbon />
      <div className="flex min-h-0 flex-1">
        <Canvas />
        <Palette />
      </div>
      <StatusBar />
      <Taskbar />
    </div>
  );
}
